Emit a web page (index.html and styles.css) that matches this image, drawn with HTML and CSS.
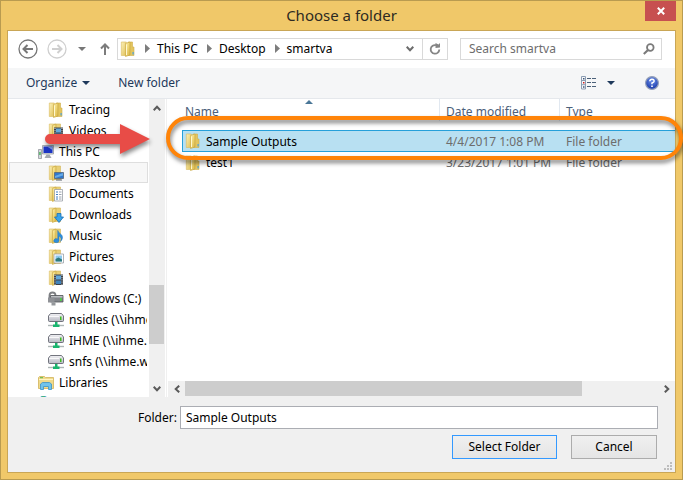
FILE: index.html
```html
<!DOCTYPE html>
<html lang="en">
<head>
<meta charset="utf-8">
<title>Choose a folder</title>
<link rel="stylesheet" href="styles.css">
</head>
<body>
<svg class="defs" aria-hidden="true">
  <defs>
    <linearGradient id="gold" x1="0" x2="1" y1="0" y2="1">
      <stop offset="0" stop-color="#fff3b0"/><stop offset=".5" stop-color="#edd474"/><stop offset="1" stop-color="#d6b23e"/>
    </linearGradient>
    <linearGradient id="pale" x1="0" x2="1" y1="0" y2="1">
      <stop offset="0" stop-color="#fbf0b8"/><stop offset="1" stop-color="#e0c055"/>
    </linearGradient>
    <linearGradient id="metal" x1="0" x2="0" y1="0" y2="1">
      <stop offset="0" stop-color="#f2f2f5"/><stop offset="1" stop-color="#b9bac4"/>
    </linearGradient>
    <radialGradient id="helpblue" cx=".5" cy=".3" r=".7">
      <stop offset="0" stop-color="#6f93ea"/><stop offset="1" stop-color="#1535a8"/>
    </radialGradient>
  </defs>
  <symbol id="folder" viewBox="0 0 16 16">
    <path d="M8 1h4.500v5h1.500v8.500H8z" fill="#e3c55f" stroke="#d0af4c" stroke-width=".6"/>
    <path d="M12.500 11h1.200v2.500h-1.200z" fill="#4aa3e0"/>
    <path d="M1.300 1h5v13.500h-5z" fill="url(#pale)" stroke="#d9bb5c" stroke-width=".6"/>
    <path d="M5.500 2.500L10 1v13l-4.500 1.500z" fill="url(#gold)" stroke="#c8a53f" stroke-width=".6"/>
    <path d="M6.500 3.500v10.500" stroke="#fff8cf"/>
  </symbol>
  <symbol id="shell" viewBox="0 0 16 16">
    <path d="M6 1h6.500v13.500H6z" fill="#e8cf75" stroke="#d3b659" stroke-width=".6"/>
    <path d="M1.300 1h4.500v13.500H1.300z" fill="url(#pale)" stroke="#d9bb5c" stroke-width=".6"/>
    <path d="M4.500 2.500L8 1v13l-3.500 1.500z" fill="url(#gold)" stroke="#c8a53f" stroke-width=".6"/>
  </symbol>
  <symbol id="desktop" viewBox="0 0 16 16">
    <use href="#shell"/>
    <path d="M6.500 7.500h9v6h-9z" fill="#2f78cc" stroke="#566678" stroke-width=".8"/>
    <path d="M7 11l8-3v2.500L7 13z" fill="#66abe8"/><path d="M8 14.500h6v1H8z" fill="#56606c"/>
  </symbol>
  <symbol id="documents" viewBox="0 0 16 16">
    <use href="#shell"/>
    <path d="M6.500 3.500h8v11.500h-8z" fill="#fff" stroke="#9a9fa6" stroke-width=".8"/>
    <path d="M8 6h2M8 8.500h2M8 11h2M8 13h2" stroke="#3f7fc4"/><path d="M11 6h2.500M11 8.500h2.500M11 11h2.500M11 13h2.500" stroke="#9ba4b0"/>
  </symbol>
  <symbol id="downloads" viewBox="0 0 16 16">
    <use href="#shell"/>
    <path d="M9 6.500h4V10h2.500l-4.500 5.500L6.500 10H9z" fill="#38a4ec" stroke="#1b6fb4" stroke-width=".8"/>
  </symbol>
  <symbol id="music" viewBox="0 0 16 16">
    <use href="#shell"/>
    <path d="M10 2.500c.5 3 5 3.500 4.500 7.500-.2 1.500-1 2.500-2 3.500 1-2.500.8-4.500-1.500-5.500v4.700A2.600 2 0 1 1 9.700 11V2.500z" fill="#2d8fdc" stroke="#226cb0" stroke-width=".4"/>
  </symbol>
  <symbol id="pictures" viewBox="0 0 16 16">
    <use href="#shell"/>
    <path d="M6 5h9.500v9H6z" fill="#fff" stroke="#9a9fa6" stroke-width=".8"/>
    <path d="M7.500 6.500H14v6H7.500z" fill="#8cc9ee"/><path d="M7.500 10l3-1.500 3.500 2v2H7.500z" fill="#2d7a7d"/>
  </symbol>
  <symbol id="videos" viewBox="0 0 16 16">
    <use href="#shell"/>
    <path d="M6 4.500h9V15H6z" fill="#3b4148"/>
    <path d="M8 5.500h5v4H8z" fill="#63a9dc"/><path d="M8 10.500h5V14H8z" fill="#3f83bd"/>
    <path d="M7 5v10M14 5v10" stroke="#dfe4e8" stroke-dasharray="1 1.200"/>
  </symbol>
  <symbol id="pc" viewBox="0 0 16 16">
    <path d="M.5 5.500h3v9h-3z" fill="#d5d8dc" stroke="#868b92" stroke-width=".7"/><path d="M1.300 8h1.300v3H1.300z" fill="#35b04a"/>
    <path d="M4.500 1.500h11v8.500h-11z" fill="#d9dce1" stroke="#8b9097" stroke-width=".7"/>
    <path d="M5.500 2.500h9V9h-9z" fill="#1c35c4"/><path d="M9 2.500h5.500V6z" fill="#819ff2"/>
    <path d="M8.500 10.500h3L13.500 14h-7z" fill="#a4a9b0"/>
  </symbol>
  <symbol id="drive" viewBox="0 0 16 16">
    <path d="M1.500 7V4.500Q1.500 1.500 4.500 1.500T7.500 4.500V6" fill="none" stroke="#7d7f83" stroke-width="1.800"/>
    <path d="M2.500 4.500h12.500v6.500H2.500z" fill="#83868b" stroke="#505358" stroke-width=".8"/>
    <path d="M3 5h11.500v1.500H3z" fill="#bbbec2"/><path d="M12 7h1.500v3H12z" fill="#47d53e"/>
    <path d="M0 6.500h6.500v5H0z" fill="#8f9196"/><path d="M3.500 11.500h4v3h-4z" fill="#95989c"/>
  </symbol>
  <symbol id="netdrive" viewBox="0 0 16 16">
    <path d="M0 13.500h16" stroke="#aeb6b6" stroke-width="1.400"/>
    <path d="M7 9h2.500v3.500h2v2.500H5v-2.500h2z" fill="#19b56f"/>
    <path d="M2.500 1.500h11l2 2.500v4.500q0 1-1 1h-13q-1 0-1-1V4z" fill="url(#metal)" stroke="#63656f" stroke-width=".9"/>
    <path d="M1 4.500h10" stroke="#fff" stroke-width=".8"/><path d="M12 4.500h1.500V8H12z" fill="#3fbd22"/>
  </symbol>
  <symbol id="libraries" viewBox="0 0 16 16">
    <path d="M.5 2.500l1-1h5l1 1h8v11H.5z" fill="#efda8c" stroke="#d2b45a" stroke-width=".8"/>
    <path d="M2 2.700h3" stroke="#58b94c"/><path d="M1 4.500h14" stroke="#fff5c4"/>
    <path d="M2.500 14.500V9l2-1.500h7l2 1.500v5.500h-3v-3h-5v3z" fill="#6fc3ec" stroke="#3b92c6" stroke-width=".8"/>
  </symbol>
  <symbol id="network" viewBox="0 0 16 16">
    <circle cx="5.500" cy="5" r="5.200" fill="#2f9ad0"/><path d="M3 1q3-2 4 0L5 3z" fill="#53b86a"/>
  </symbol>
  <symbol id="crumb" viewBox="0 0 5 9"><path d="M0 0l5 4.500L0 9z" fill="#7d7d7d"/></symbol>
  <symbol id="caret" viewBox="0 0 8 4"><path d="M0 0h8L4 4z" fill="currentColor"/></symbol>
  <symbol id="chev" viewBox="0 0 8 8"><path d="M.700 1.800L4 5.300l3.300-3.500" fill="none" stroke="currentColor" stroke-width="2"/></symbol>
</svg>

<main class="window">
  <header class="titlebar">
    <h1>Choose a folder</h1>
    <button class="close" aria-label="Close"><svg width="8" height="8" viewBox="0 0 8 8"><path d="M.8.800l6.400 6.400M7.200.800L.8 7.200" stroke="#fff" stroke-width="2"/></svg></button>
  </header>

  <div class="client">
    <nav class="navbar">
      <button class="history" aria-label="Back"><svg width="20" height="20" viewBox="0 0 20 20" fill="none" stroke="#777"><circle cx="10" cy="10" r="9" stroke-width="1.300"/><path d="M5.500 10H15M9.500 6l-4 4 4 4" stroke-width="2"/></svg></button>
      <button class="history" aria-label="Forward"><svg width="20" height="20" viewBox="0 0 20 20" fill="none" stroke="#cfcfcf"><circle cx="10" cy="10" r="9" stroke-width="1.300"/><path d="M5 10h9.500M10.500 6l4 4-4 4" stroke-width="2"/></svg></button>
      <button class="recent" aria-label="Recent locations"><svg width="8" height="4"><use href="#caret"/></svg></button>
      <button class="up" aria-label="Up"><svg width="10" height="12" viewBox="0 0 10 12" fill="none" stroke="#7c7c7c" stroke-width="2"><path d="M5 12V1.500M1 5.500l4-4 4 4"/></svg></button>
      <div class="address">
        <svg class="icon" width="16" height="16"><use href="#folder"/></svg>
        <svg class="sep" width="5" height="9"><use href="#crumb"/></svg>
        <button>This PC</button>
        <svg class="sep" width="5" height="9"><use href="#crumb"/></svg>
        <button>Desktop</button>
        <svg class="sep" width="5" height="9"><use href="#crumb"/></svg>
        <button>smartva</button>
        <button class="drop" aria-label="Previous locations"><svg width="8" height="8"><use href="#chev"/></svg></button>
        <button class="refresh" aria-label="Refresh"><svg width="12" height="12" viewBox="0 0 12 12"><path d="M7 2.200A4.300 4.300 0 1 0 10.300 6.500" fill="none" stroke="#858585" stroke-width="1.800"/><path d="M6.500 0v5L11 4.500V0L9.500 1.500z" fill="#858585"/></svg></button>
      </div>
      <div class="search">
        <input type="search" aria-label="Search smartva" placeholder="Search smartva">
        <svg width="12" height="12" viewBox="0 0 12 12" fill="none" stroke="#7b7b7b"><circle cx="7.300" cy="4.500" r="3.300" stroke-width="1.800"/><path d="M5 7L.8 11" stroke-width="2.200"/></svg>
      </div>
    </nav>

    <div class="toolbar">
      <button>Organize <svg width="8" height="4"><use href="#caret"/></svg></button>
      <button>New folder</button>
      <button class="view" aria-label="Change your view">
        <svg width="16" height="14" viewBox="0 0 16 14" fill="none"><path d="M.5.500h4v12.500h-4zM.5 4.500h4M.5 8.700h4" stroke="#8b9cb2"/><path d="M2 2h1.500v1.500H2zM2 10.200h1.500v1.500H2z" fill="#3d567a"/><path d="M2 6h1.500v1.500H2z" fill="#d02020"/><path d="M6 2.500h4M11 2.500h4M6 6.500h4M11 6.500h4M6 10.500h4M11 10.500h4" stroke="#4a6079"/></svg>
        <svg width="8" height="4"><use href="#caret"/></svg>
      </button>
      <button class="help" aria-label="Help"><svg width="14" height="14" viewBox="0 0 14 14"><circle cx="7" cy="7" r="6.400" fill="url(#helpblue)" stroke="#95a0b8" stroke-width="1.200"/><path d="M4.800 5.200Q5 3.200 7 3.200T9.200 5Q9.200 6.200 7 7v1.300" fill="none" stroke="#fff" stroke-width="1.500"/><path d="M6.200 9.500h1.600v1.500H6.200z" fill="#fff"/></svg></button>
    </div>

    <div class="panes">
      <ul class="tree">
        <li class="child"><svg><use href="#folder"/></svg>Tracing</li>
        <li class="child"><svg><use href="#videos"/></svg>Videos</li>
        <li><svg><use href="#pc"/></svg>This PC</li>
        <li class="child current"><svg><use href="#desktop"/></svg>Desktop</li>
        <li class="child"><svg><use href="#documents"/></svg>Documents</li>
        <li class="child"><svg><use href="#downloads"/></svg>Downloads</li>
        <li class="child"><svg><use href="#music"/></svg>Music</li>
        <li class="child"><svg><use href="#pictures"/></svg>Pictures</li>
        <li class="child"><svg><use href="#videos"/></svg>Videos</li>
        <li class="child"><svg><use href="#drive"/></svg>Windows (C:)</li>
        <li class="child"><svg><use href="#netdrive"/></svg>nsidles (\\ihme.wa</li>
        <li class="child"><svg><use href="#netdrive"/></svg>IHME (\\ihme.wa</li>
        <li class="child"><svg><use href="#netdrive"/></svg>snfs (\\ihme.wa</li>
        <li><svg><use href="#libraries"/></svg>Libraries</li>
        <li><svg><use href="#network"/></svg></li>
      </ul>
      <div class="vscroll">
        <button aria-label="Scroll up"><svg class="flip" width="8" height="8"><use href="#chev"/></svg></button>
        <div class="vtrack"><div class="vthumb"></div></div>
        <button aria-label="Scroll down"><svg width="8" height="8"><use href="#chev"/></svg></button>
      </div>
      <section class="files">
        <table>
          <colgroup><col class="col-name"><col class="col-date"><col></colgroup>
          <thead>
            <tr>
              <th><span>Name</span><svg class="sort" width="8" height="4" viewBox="0 0 8 4"><path d="M0 4h8L4 0z" fill="#4a7797"/></svg></th>
              <th><span>Date modified</span></th>
              <th><span>Type</span></th>
            </tr>
          </thead>
          <tbody>
            <tr class="selected"><td><div class="name"><svg><use href="#folder"/></svg>Sample Outputs</div></td><td>4/4/2017 1:08 PM</td><td>File folder</td></tr>
            <tr><td><div class="name"><svg><use href="#folder"/></svg>test1</div></td><td>3/23/2017 1:01 PM</td><td>File folder</td></tr>
          </tbody>
        </table>
        <div class="hscroll">
          <button aria-label="Scroll left"><svg class="left" width="8" height="8"><use href="#chev"/></svg></button>
          <div class="htrack"><div class="hthumb"></div></div>
          <button aria-label="Scroll right"><svg class="right" width="8" height="8"><use href="#chev"/></svg></button>
        </div>
      </section>
      <div class="ring"></div>
      <svg class="arrow" width="106" height="30" viewBox="0 0 106 30"><path d="M5 10h70V0l30 15-30 15V20H5a5 5 0 0 1 0-10z" fill="#e84c47"/></svg>
    </div>

    <footer class="footer">
      <div class="field">
        <label for="folder-name">Folder:</label>
        <input id="folder-name" type="text" value="Sample Outputs">
      </div>
      <div class="actions">
        <button class="primary">Select Folder</button>
        <button>Cancel</button>
      </div>
      <svg class="grip" width="8" height="8" viewBox="0 0 8 8"><path d="M6 0h2v2H6zM3 3h2v2H3zM6 3h2v2H6zM0 6h2v2H0zM3 6h2v2H3zM6 6h2v2H6z" fill="#bdbdbd"/></svg>
    </footer>
  </div>
</main>
</body>
</html>
```
FILE: styles.css
```css
* { box-sizing: border-box; }

body {
  margin: 0;
  font: 12px/20px "Noto Sans", "Open Sans", sans-serif;
  color: #000;
}

button, input { font: inherit; color: inherit; }

button {
  padding: 0;
  border: 0;
  background: none;
  display: flex;
  align-items: center;
  justify-content: center;
}

svg { display: block; flex: none; }

.defs { position: absolute; width: 0; height: 0; }

.window {
  display: flex;
  flex-direction: column;
  min-height: 100vh;
  padding: 0 6px 6px;
  border: 1px solid #b99b50;
  background: #f0c869;
}

.titlebar {
  position: relative;
  height: 29px;
}

.titlebar h1 {
  margin: 0;
  font-size: 15px;
  font-weight: 400;
  line-height: 28px;
  text-align: center;
  color: #2d2a22;
}

.close {
  position: absolute;
  top: 0;
  right: 0;
  width: 31px;
  height: 20px;
  background: #c75050;
}

.client {
  flex: 1;
  display: flex;
  flex-direction: column;
  border: 1px solid #c9a656;
  background: #fff;
}

.navbar {
  display: flex;
  align-items: center;
  height: 37px;
  padding: 0 13px 2px 10px;
}

.history { width: 20px; margin-right: 9px; }
.recent { width: 12px; margin-right: 11px; color: #777; }
.up { width: 12px; margin-right: 6px; margin-left: 0; }

.address {
  flex: 1;
  display: flex;
  align-items: center;
  height: 22px;
  margin-right: 12px;
  padding-left: 2px;
  border: 1px solid #d9d9d9;
}

.address .sep { margin: 0 7px 0 9px; }
.address .drop { width: 16px; margin-left: auto; color: #6c6c6c; }
.address .refresh {
  width: 25px;
  height: 20px;
  margin-left: 4px;
  border-left: 1px solid #d9d9d9;
}

.search {
  display: flex;
  align-items: center;
  width: 202px;
  height: 22px;
  padding: 0 6px 0 8px;
  border: 1px solid #d9d9d9;
}

.search input {
  flex: 1;
  min-width: 0;
  padding: 0;
  border: 0;
  outline: 0;
  background: none;
  appearance: none;
}

.search input::placeholder { color: #6d6d6d; }

.toolbar {
  display: flex;
  align-items: center;
  gap: 28px;
  height: 31px;
  padding: 0 16px 0 18px;
  border-bottom: 1px solid #e5e8ec;
  background: #f5f6f7;
  color: #1e395b;
}

.toolbar button { gap: 5px; }
.toolbar .view { gap: 10px; margin-left: auto; }
.toolbar .help { margin-left: 2px; }

.panes {
  position: relative;
  flex: 1 1 0;
  display: flex;
  min-height: 240px;
}

.tree {
  flex: none;
  width: 141px;
  margin: 0;
  padding: 0 1px;
  height: 298px;
  overflow: hidden;
  list-style: none;
  line-height: 19px;
}

.tree li {
  display: flex;
  align-items: center;
  gap: 5px;
  height: 21px;
  padding-left: 28px;
  border: 1px solid transparent;
  white-space: nowrap;
  overflow: hidden;
}

.tree .child { padding-left: 38px; }
.tree .current { border-color: #dedede; background: #f7f7f7; }
.tree svg, .name svg { width: 16px; height: 16px; }

.vscroll {
  flex: none;
  display: flex;
  flex-direction: column;
  width: 16px;
  background: #f0f0f0;
  color: #5a5a5a;
}

.vscroll button { height: 17px; }
.vtrack { flex: 1; display: flex; flex-direction: column; justify-content: flex-end; padding-bottom: 36px; }
.vthumb { height: 22%; min-height: 59px; width: 15px; background: #cdcdcd; }

.flip { transform: rotate(180deg); }
.left { transform: rotate(90deg); }
.right { transform: rotate(-90deg); }

.files {
  flex: 1;
  min-width: 0;
  display: flex;
  flex-direction: column;
  justify-content: space-between;
  margin-left: 1px;
  border-left: 1px solid #f0f0f0;
}

table {
  table-layout: fixed;
  border-collapse: separate;
  border-spacing: 0;
  margin-left: 15px;
  width: calc(100% - 15px);
}

.col-name { width: 257px; }
.col-date { width: 120px; }

th {
  position: relative;
  height: 31px;
  padding: 0;
  font-weight: 400;
  text-align: left;
  vertical-align: top;
  color: #4c607a;
}

th span { display: block; padding: 3px 0 0 6px; line-height: 19px; border-left: 1px solid #e1e8f0; }
th:first-child span { padding-left: 3px; border-left: 0; }

.sort { position: absolute; top: 1px; left: 123px; }

td {
  height: 21px;
  padding: 0 0 0 7px;
  line-height: 19px;
  color: #6d6d6d;
}

td:first-child { padding-left: 3px; color: #000; }
.name { display: flex; align-items: center; gap: 5px; }

.selected td { height: 22px; border: solid #26a0da; border-width: 1px 0; background: #b8e0f2; }
.selected td:first-child { border-left-width: 1px; padding-left: 2px; }

.hscroll {
  display: flex;
  height: 16px;
  margin-left: 1px;
  background: #f0f0f0;
  color: #5a5a5a;
}

.hscroll button { width: 17px; height: 15px; }
.htrack { flex: 1; }
.hthumb { width: 84%; height: 15px; background: #cdcdcd; }

.ring {
  position: absolute;
  top: 17px;
  left: 158px;
  right: -8px;
  height: 44px;
  border: 4px solid #ff8409;
  border-radius: 22px;
  filter: drop-shadow(1px 3px 2px rgba(0, 0, 0, .5));
}

.arrow {
  position: absolute;
  top: 25px;
  left: 37px;
  overflow: visible;
  filter: drop-shadow(1px 3px 2px rgba(0, 0, 0, .45));
}

.footer {
  position: relative;
  padding: 9px 17px 13px;
  background: #f0f0f0;
}

.field { display: flex; align-items: center; gap: 3px; padding-left: 113px; }

.field input {
  flex: 1;
  min-width: 0;
  height: 23px;
  padding: 0 5px 1px;
  border: 1px solid #abadb3;
  background: #fff;
}

.actions { display: flex; justify-content: flex-end; gap: 14px; margin-top: 6px; padding-right: 1px; }

.actions button {
  width: 86px;
  height: 24px;
  border: 1px solid #acacac;
  background: linear-gradient(#f0f0f0, #e5e5e5);
}

.actions .primary { width: 105px; border-color: #3399ff; }

.grip { position: absolute; right: 3px; bottom: 2px; }
```
